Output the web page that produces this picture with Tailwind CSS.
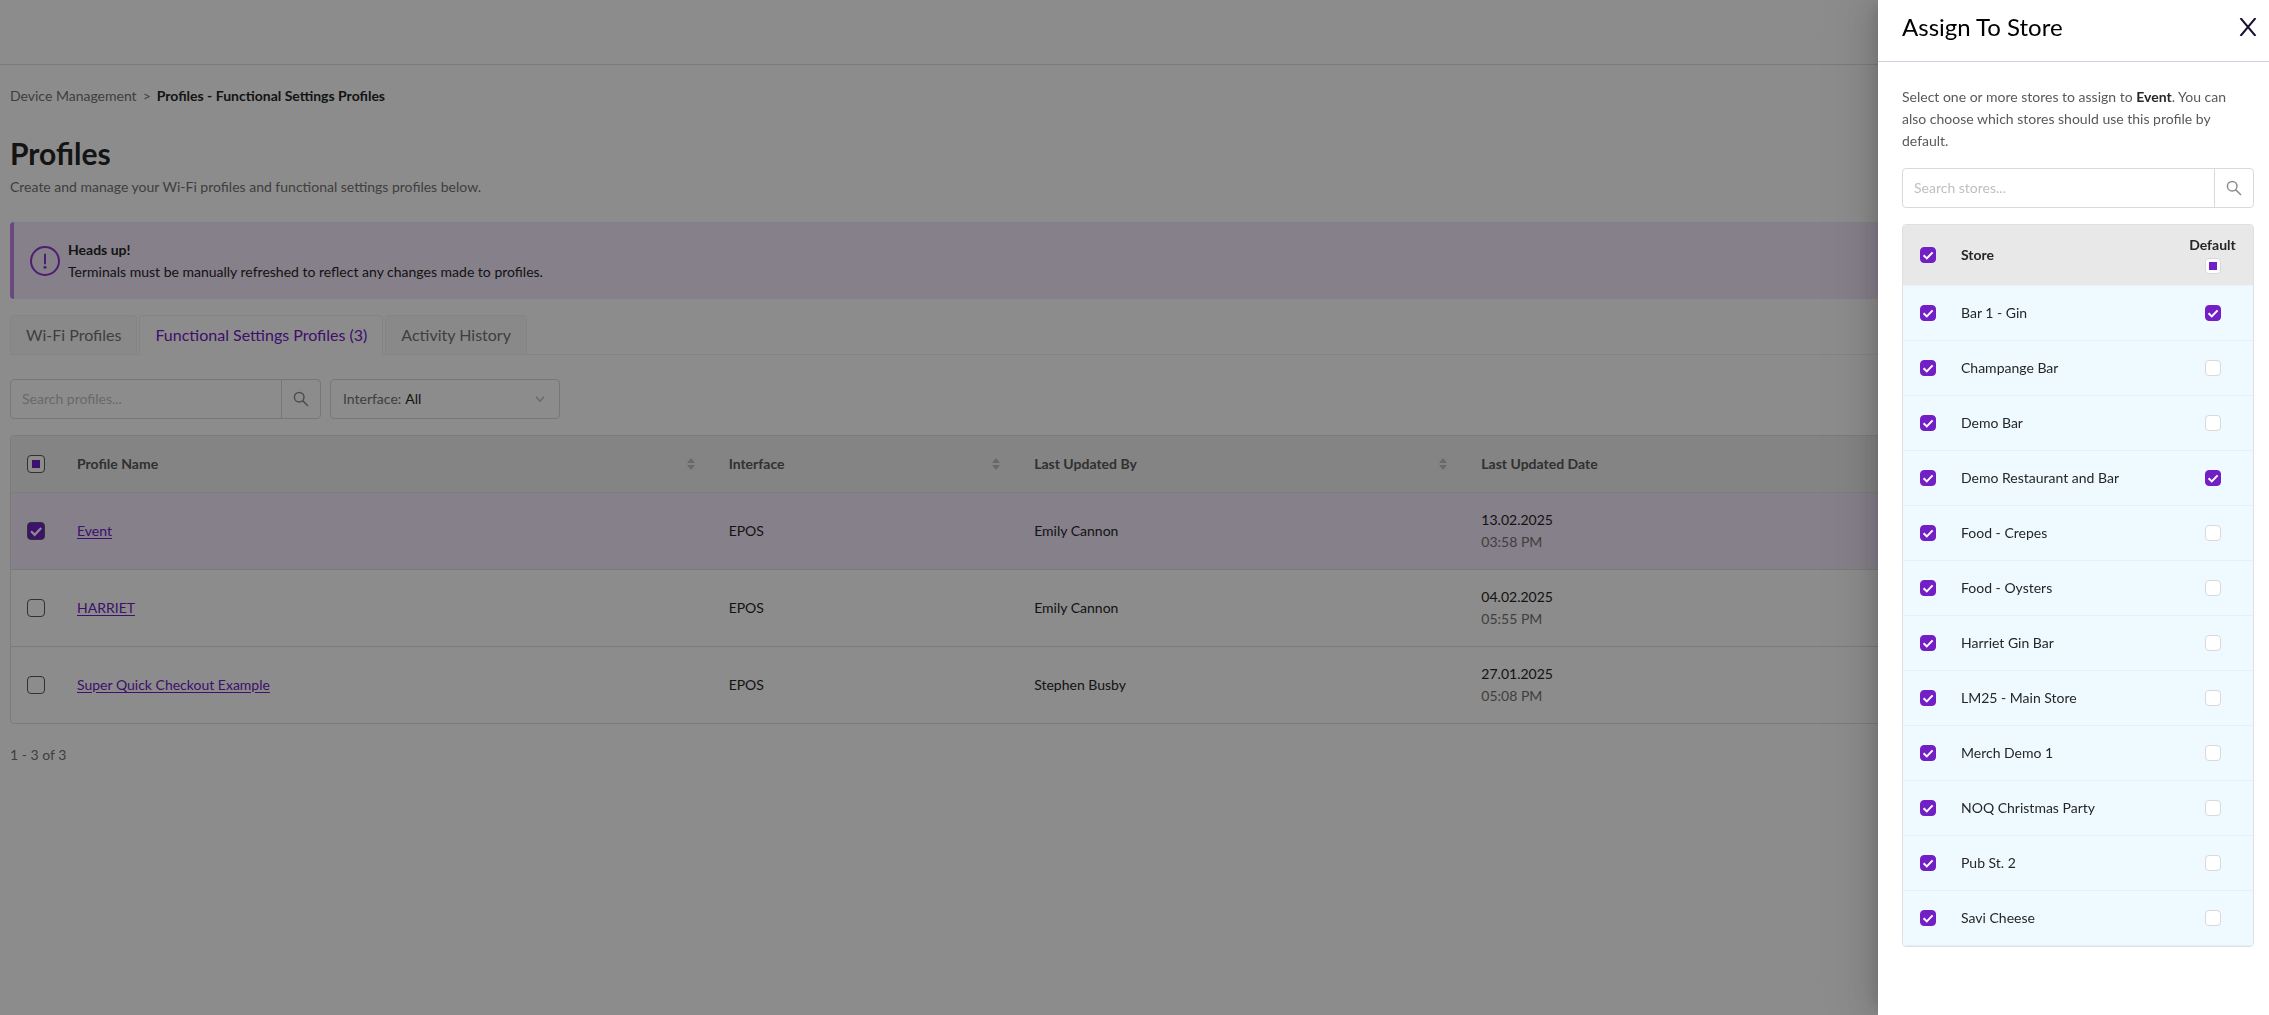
<!DOCTYPE html>
<html lang="en">
<head>
    <meta charset="UTF-8">
    <meta name="viewport" content="width=device-width, initial-scale=1.0">
    <title>Profiles - Functional Settings Profiles</title>
    <script src="https://cdn.jsdelivr.net/npm/@tailwindcss/browser@4"></script>
</head>
<body class="bg-white font-['Lato',sans-serif] text-sm leading-[22px] text-[#262626] h-screen overflow-hidden">
    <header class="h-[65px] border-b border-[#e0e0e0]"></header>

    <main class="px-[10px]">
        <nav class="flex gap-[6px] pt-5" aria-label="Breadcrumb">
            <a href="#" class="text-[#737373]">Device Management</a>
            <span class="text-[#737373]">&gt;</span>
            <span class="font-bold">Profiles - Functional Settings Profiles</span>
        </nav>

        <h1 class="text-3xl leading-9 font-bold mt-7">Profiles</h1>
        <p class="text-[#737373] mt-[5px]">Create and manage your Wi-Fi profiles and functional settings profiles below.</p>

        <div class="flex items-center gap-2 h-[77px] mt-6 pl-4 rounded-sm border-l-4 border-[#bf85e5] bg-[#f3e9fa]">
            <svg class="w-[30px] h-[30px]" viewBox="0 0 30 30" fill="none" stroke="#8d35cf" stroke-width="2" stroke-linecap="round">
                <circle cx="15" cy="15" r="14"/>
                <path d="M15 8.5v9"/>
                <circle cx="15" cy="21.3" r="1.5" fill="#8d35cf" stroke="none"/>
            </svg>
            <div>
                <p class="font-bold">Heads up!</p>
                <p>Terminals must be manually refreshed to reflect any changes made to profiles.</p>
            </div>
        </div>

        <div class="flex gap-[2px] mt-4 border-b border-[#f0f0f0] text-base text-[#737373]">
            <button class="h-10 -mb-px px-[15px] rounded-t border border-[#f0f0f0] bg-[#fafafa]">Wi-Fi Profiles</button>
            <button class="h-10 -mb-px px-[15px] rounded-t border border-[#f0f0f0] border-b-white bg-white text-[#7220c6]">Functional Settings Profiles (3)</button>
            <button class="h-10 -mb-px px-[15px] rounded-t border border-[#f0f0f0] bg-[#fafafa]">Activity History</button>
        </div>

        <div class="flex gap-[9px] mt-6">
            <div class="flex w-[311px] h-10 border border-[#d9d9d9] rounded">
                <input type="text" aria-label="Search profiles" placeholder="Search profiles..." class="flex-1 min-w-0 px-[11px] placeholder:text-[#bfbfbf]">
                <button aria-label="Search" class="w-[39px] flex items-center justify-center border-l border-[#d9d9d9] text-[#8c8c8c]">
                    <svg class="w-4 h-4" viewBox="0 0 16 16" fill="none" stroke="currentColor" stroke-width="1.5"><circle cx="6.2" cy="6.2" r="4.8"/><path d="M9.6 9.6L15 15"/></svg>
                </button>
            </div>
            <div class="relative flex items-center w-[230px] h-10 border border-[#d9d9d9] rounded pl-3">
                <label for="interface" class="text-[#737373]">Interface:</label>
                <select id="interface" class="flex-1 h-full pl-1 appearance-none">
                    <option>All</option>
                </select>
                <svg class="absolute right-[14px] w-[10px] h-[10px] text-[#bfbfbf] pointer-events-none" viewBox="0 0 10 10" fill="none" stroke="currentColor" stroke-width="1.4"><path d="M1 2.8l4 4.4 4-4.4"/></svg>
            </div>
        </div>

        <div class="mt-4 border border-[#e0e0e0] rounded overflow-hidden">
            <table class="w-full table-fixed text-left">
                <thead>
                    <tr class="h-14 bg-[#f0f0f0] border-b border-[#e6e6e6] text-[#595959]">
                        <th class="w-[50px] pl-4">
                            <input type="checkbox" aria-label="Select all profiles" class="block appearance-none w-[18px] h-[18px] rounded border border-[#595959] bg-white bg-[linear-gradient(#7220c6,#7220c6)] bg-[length:8px_8px] bg-center bg-no-repeat">
                        </th>
                        <th class="w-[29%] px-4">
                            <div class="flex items-center justify-between">Profile Name
                                <svg class="w-2 h-3 mr-[2px] text-[#bfbfbf]" viewBox="0 0 8 12" fill="currentColor"><path d="M4 0l4 5H0zM4 12l4-5H0z"/></svg>
                            </div>
                        </th>
                        <th class="w-[13.6%] px-4">
                            <div class="flex items-center justify-between">Interface
                                <svg class="w-2 h-3 mr-[2px] text-[#bfbfbf]" viewBox="0 0 8 12" fill="currentColor"><path d="M4 0l4 5H0zM4 12l4-5H0z"/></svg>
                            </div>
                        </th>
                        <th class="w-[19.9%] px-4">
                            <div class="flex items-center justify-between">Last Updated By
                                <svg class="w-2 h-3 mr-[2px] text-[#bfbfbf]" viewBox="0 0 8 12" fill="currentColor"><path d="M4 0l4 5H0zM4 12l4-5H0z"/></svg>
                            </div>
                        </th>
                        <th class="px-4">Last Updated Date</th>
                    </tr>
                </thead>
                <tbody id="profiles"></tbody>
            </table>
        </div>

        <p class="mt-5 text-[#737373]">1 - 3 of 3</p>
    </main>

    <div class="fixed inset-0 bg-black/45"></div>

    <aside class="fixed inset-y-0 right-0 w-[391px] bg-white shadow-[-6px_0_16px_-8px_rgba(0,0,0,0.16),-9px_0_28px_0_rgba(0,0,0,0.1),-12px_0_48px_16px_rgba(0,0,0,0.06)]">
        <div class="flex items-center justify-between h-[62px] pb-2 pl-6 pr-3 border-b border-[#cbd5e1]">
            <h2 class="text-2xl text-black">Assign To Store</h2>
            <button aria-label="Close" class="text-[#1b0f33]">
                <svg class="w-[18px] h-[18px]" viewBox="0 0 18 18" fill="none" stroke="currentColor" stroke-width="2"><path d="M1.5 0L16.5 18M16.5 0L1.5 18"/></svg>
            </button>
        </div>
        <div class="pl-6 pr-[15px] pt-6">
            <p class="pr-4 text-[#595959]">Select one or more stores to assign to <span class="font-bold text-[#262626]">Event</span>. You can also choose which stores should use this profile by default.</p>

            <div class="flex h-10 mt-4 border border-[#d9d9d9] rounded">
                <input type="text" aria-label="Search stores" placeholder="Search stores..." class="flex-1 min-w-0 px-[11px] placeholder:text-[#bfbfbf]">
                <button aria-label="Search" class="w-[39px] flex items-center justify-center border-l border-[#d9d9d9] text-[#8c8c8c]">
                    <svg class="w-4 h-4" viewBox="0 0 16 16" fill="none" stroke="currentColor" stroke-width="1.5"><circle cx="6.2" cy="6.2" r="4.8"/><path d="M9.6 9.6L15 15"/></svg>
                </button>
            </div>

            <div class="mt-4 border border-[#e0e0e0] rounded overflow-hidden">
                <table class="w-full table-fixed text-left">
                    <thead>
                        <tr class="h-[60px] bg-[#e8e8e8] border-b border-[#f0f0f0]">
                            <th id="allStores" class="w-[42px] pl-[17px]"></th>
                            <th class="px-4">Store</th>
                            <th class="w-[81px]">
                                <label for="allDefault" class="block text-center leading-5">Default</label>
                                <input type="checkbox" id="allDefault" class="block mx-auto appearance-none w-4 h-4 mt-[3px] rounded border border-[#d9d9d9] bg-white bg-[linear-gradient(#7220c6,#7220c6)] bg-[length:8px_8px] bg-center bg-no-repeat">
                            </th>
                        </tr>
                    </thead>
                    <tbody id="stores"></tbody>
                </table>
            </div>
        </div>
    </aside>

    <script>
        const profiles = [
            { name: 'Event', by: 'Emily Cannon', date: '13.02.2025', time: '03:58 PM', selected: true },
            { name: 'HARRIET', by: 'Emily Cannon', date: '04.02.2025', time: '05:55 PM' },
            { name: 'Super Quick Checkout Example', by: 'Stephen Busby', date: '27.01.2025', time: '05:08 PM' },
        ];
        const stores = [
            ['Bar 1 - Gin', true],
            ['Champange Bar', false],
            ['Demo Bar', false],
            ['Demo Restaurant and Bar', true],
            ['Food - Crepes', false],
            ['Food - Oysters', false],
            ['Harriet Gin Bar', false],
            ['LM25 - Main Store', false],
            ['Merch Demo 1', false],
            ['NOQ Christmas Party', false],
            ['Pub St. 2', false],
            ['Savi Cheese', false],
        ];

        // white tick drawn over a checked box
        const tick = '<svg class="absolute inset-0 w-full h-full pointer-events-none" viewBox="0 0 16 16" fill="none" stroke="#fff" stroke-width="2"><path d="M3.6 8.2l3.2 3.2 5.8-6"/></svg>';

        function smallBox(label, checked) {
            return `
                <span class="relative block w-4 h-4">
                    <input type="checkbox" aria-label="${label}" ${checked ? 'checked' : ''} class="block appearance-none w-4 h-4 rounded border border-[#d9d9d9] bg-white checked:border-[#7220c6] checked:bg-[#7220c6]">
                    ${checked ? tick : ''}
                </span>`;
        }

        document.getElementById('profiles').innerHTML = profiles.map(p => `
            <tr class="h-[77px] border-b last:border-b-0 border-[#e0e0e0] ${p.selected ? 'bg-[#f3e9fa]' : ''}">
                <td class="pl-4">
                    <span class="relative block w-[18px] h-[18px]">
                        <input type="checkbox" aria-label="Select ${p.name}" ${p.selected ? 'checked' : ''} class="block appearance-none w-[18px] h-[18px] rounded border border-[#595959] bg-white checked:bg-[#7220c6]">
                        ${p.selected ? tick : ''}
                    </span>
                </td>
                <td class="px-4"><a href="#" class="text-[#7220c6] underline underline-offset-2">${p.name}</a></td>
                <td class="px-4">EPOS</td>
                <td class="px-4">${p.by}</td>
                <td class="px-4">${p.date}<br><span class="text-[#737373]">${p.time}</span></td>
            </tr>`).join('');

        document.getElementById('allStores').innerHTML = smallBox('Select all stores', true);

        document.getElementById('stores').innerHTML = stores.map(([name, isDefault]) => `
            <tr class="h-[55px] bg-[#eefaff] border-b border-[#e3f0f5]">
                <td class="pl-[17px]">${smallBox('Assign ' + name, true)}</td>
                <td class="px-4">${name}</td>
                <td><div class="flex justify-center">${smallBox('Default for ' + name, isDefault)}</div></td>
            </tr>`).join('');
    </script>
</body>
</html>
